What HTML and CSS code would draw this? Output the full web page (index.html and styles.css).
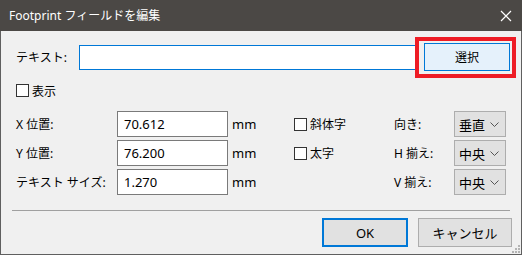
FILE: index.html
```html
<!DOCTYPE html>
<html lang="ja">

<head>
    <meta charset="UTF-8">
    <title>Footprint フィールドを編集</title>
    <link rel="stylesheet" href="styles.css">
</head>

<body>

    <div class="janela">
        <div class="barra-titulo">
            <span class="titulo">Footprint フィールドを編集</span>
            <svg class="fechar" width="12" height="12" viewBox="0 0 12 12">
                <path d="M1 1 L11 11 M11 1 L1 11" stroke="#fff" stroke-width="1.2" fill="none" />
            </svg>
        </div>

        <div class="conteudo">
            <div class="linha-texto">
                <span class="rotulo">テキスト:</span>
                <div class="campo-texto"></div>
                <div class="botao-selecionar">選択</div>
                <div class="destaque"></div>
            </div>

            <label class="check check-mostrar"><span class="caixa"></span>表示</label>

            <div class="grade">
                <span class="rotulo">X 位置:</span>
                <div class="campo">70.612</div>
                <span class="unidade">mm</span>
                <label class="check"><span class="caixa"></span>斜体字</label>
                <span class="rotulo">向き:</span>
                <div class="seletor">垂直<svg width="9" height="5" viewBox="0 0 9 5"><path d="M0.5 0.5 L4.5 4.5 L8.5 0.5" stroke="#555" fill="none" /></svg></div>

                <span class="rotulo">Y 位置:</span>
                <div class="campo">76.200</div>
                <span class="unidade">mm</span>
                <label class="check"><span class="caixa"></span>太字</label>
                <span class="rotulo">H 揃え:</span>
                <div class="seletor">中央<svg width="9" height="5" viewBox="0 0 9 5"><path d="M0.5 0.5 L4.5 4.5 L8.5 0.5" stroke="#555" fill="none" /></svg></div>

                <span class="rotulo">テキスト サイズ:</span>
                <div class="campo">1.270</div>
                <span class="unidade">mm</span>
                <span></span>
                <span class="rotulo">V 揃え:</span>
                <div class="seletor">中央<svg width="9" height="5" viewBox="0 0 9 5"><path d="M0.5 0.5 L4.5 4.5 L8.5 0.5" stroke="#555" fill="none" /></svg></div>
            </div>

            <div class="separador"></div>

            <div class="botoes">
                <div class="botao botao-ok">OK</div>
                <div class="botao">キャンセル</div>
            </div>
        </div>

        <svg class="alca" width="8" height="8" viewBox="0 0 8 8">
            <rect x="6" y="0" width="2" height="2" fill="#b4b4b4" />
            <rect x="3" y="3" width="2" height="2" fill="#b4b4b4" />
            <rect x="6" y="3" width="2" height="2" fill="#b4b4b4" />
            <rect x="0" y="6" width="2" height="2" fill="#b4b4b4" />
            <rect x="3" y="6" width="2" height="2" fill="#b4b4b4" />
            <rect x="6" y="6" width="2" height="2" fill="#b4b4b4" />
        </svg>
    </div>

</body>

</html>
```

FILE: styles.css
```css
html,
body {
    margin: 0;
    padding: 0;
    background-color: #f0f0f0;
}

body {
    font-family: "Noto Sans", "Noto Sans CJK JP", sans-serif;
    font-size: 12px;
    color: #000;
}

.janela {
    position: relative;
    width: 522px;
    height: 255px;
    box-sizing: border-box;
    border: 1px solid #5f5f5f;
    border-top: none;
    background-color: #f0f0f0;
}

.barra-titulo {
    display: flex;
    align-items: center;
    justify-content: space-between;
    height: 31px;
    margin: 0 -1px;
    padding: 0 10px 0 9px;
    background-color: #4b4845;
    color: #fff;
    font-size: 12px;
}

.titulo {
    margin-top: -2px;
}

.conteudo {
    padding: 0 0 0 15px;
}

.linha-texto {
    position: relative;
    display: flex;
    align-items: center;
    height: 28px;
    margin-top: 12px;
}

.rotulo {
    white-space: nowrap;
}

.linha-texto .rotulo {
    width: 63px;
}

.campo-texto {
    width: 333px;
    height: 21px;
    border: 1px solid #0078d7;
    padding: 1px;
    background-color: #fff;
}

.botao-selecionar {
    display: flex;
    align-items: center;
    justify-content: center;
    box-sizing: border-box;
    width: 86px;
    height: 28px;
    margin-left: 8px;
    border: 1px solid #0078d7;
    background-color: #e5f1fb;
}

.destaque {
    position: absolute;
    left: 399px;
    top: -6px;
    width: 93px;
    height: 33px;
    border: 4px solid #ee1c25;
}

.check {
    display: flex;
    align-items: center;
    gap: 3px;
    height: 17px;
}

.caixa {
    display: inline-block;
    box-sizing: border-box;
    width: 13px;
    height: 13px;
    border: 1px solid #333;
    background-color: #fff;
}

.check-mostrar {
    margin-top: 11px;
}

.grade {
    display: grid;
    grid-template-columns: 101px 111px 66px 100px 60px 52px;
    grid-auto-rows: 26px;
    row-gap: 3px;
    align-items: center;
    margin-top: 12px;
}

.campo {
    box-sizing: border-box;
    height: 26px;
    padding: 0 6px;
    border: 1px solid #7a7a7a;
    background-color: #fff;
    font-size: 13px;
    line-height: 24px;
}

.unidade {
    padding-left: 4px;
    font-size: 13px;
}

.seletor {
    display: flex;
    align-items: center;
    justify-content: space-between;
    box-sizing: border-box;
    height: 26px;
    padding: 0 6px 0 4px;
    border: 1px solid #adadad;
    background-color: #e1e1e1;
    font-size: 13px;
}

.separador {
    height: 1px;
    margin: 15px 11px 0 -4px;
    background-color: #a0a0a0;
}

.botoes {
    display: flex;
    justify-content: flex-end;
    gap: 10px;
    margin-top: 7px;
    padding-right: 9px;
}

.botao {
    display: flex;
    align-items: center;
    justify-content: center;
    box-sizing: border-box;
    width: 94px;
    height: 29px;
    border: 1px solid #adadad;
    background-color: #e1e1e1;
    font-size: 13px;
}

.botao-ok {
    width: 86px;
    border: 2px solid #0078d7;
}

.alca {
    position: absolute;
    right: 1px;
    bottom: 1px;
}
```
